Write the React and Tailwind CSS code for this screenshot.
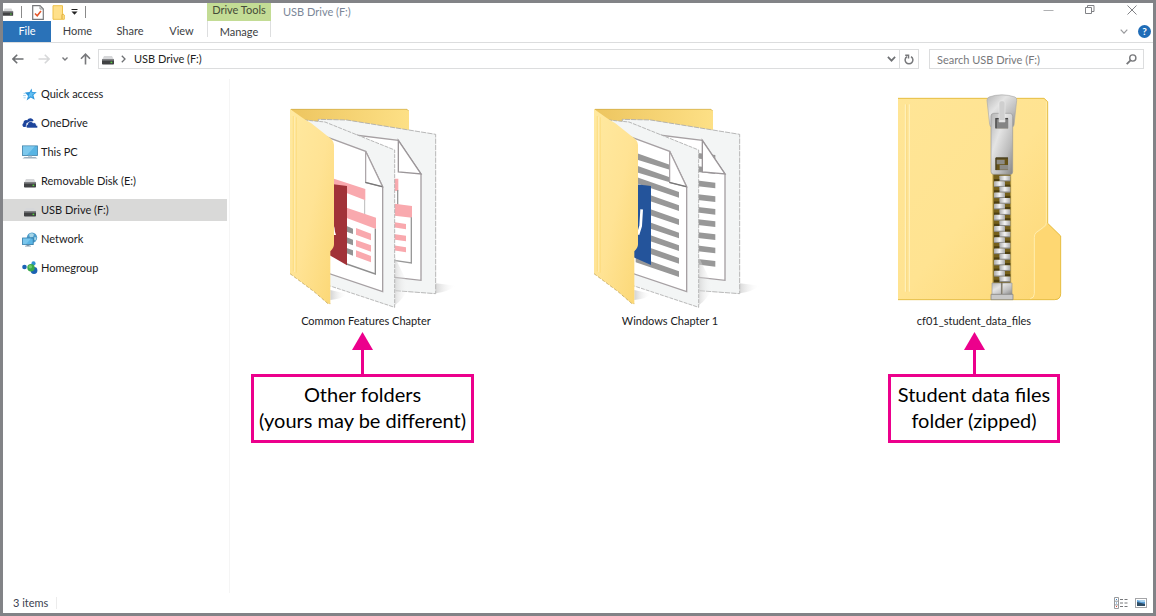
import React from "react";

function DriveIcon({ className = "w-3.5 h-2.5" }) {
  return (
    <svg viewBox="0 0 14 10" className={className} aria-hidden="true">
      <path d="M3 1h8l2 4H1z" fill="#d6d7d9" />
      <path d="M1 4.5h12v4.2q0 .8-.8.8H1.8q-.8 0-.8-.8z" fill="#414244" />
      <path d="M1 4.5h12v1.2H1z" fill="#77797c" />
      <rect x="9.6" y="6.7" width="1.6" height="1.4" fill="#53d63c" />
    </svg>
  );
}

function StarIcon() {
  return (
    <svg viewBox="0 0 14 13" className="w-3.5 h-[13px]" aria-hidden="true">
      <path d="M8.500.5 9.300 3.900l4.500.3-3.400 2.800 1.300 4.800-3.900-2.300-4.200 3.100 1.400-4.700L2 4.600l4.500-.5z" fill="#2f97dc" />
      <path d="M8.300 2.200 8.600 4.800l3.200.2-2.600 1.700.6 2.900-2.200-1.400-2.300 1.300.8-2.700z" fill="#63bff2" />
      <path d="M.6 5.400h2.200M0 7.600h3M.6 9.800h2" stroke="#8ccaf0" strokeWidth=".8" />
    </svg>
  );
}

function CloudIcon() {
  return (
    <svg viewBox="0 0 16 12" className="w-4 h-3" aria-hidden="true">
      <path d="M1.600 10C.2 9.200-.1 6.900 1.500 5.900 1.300 3.600 3.800 2.500 5.100 3.400 6.500.4 10.800.3 11.600 3.900L8 5 4.600 6 4 10z" fill="#1c449b" />
      <path d="M5.600 11C3.600 10.700 3.700 7.900 5.600 7.600 5.600 4.400 9.700 3.500 11 5.900 12.900 5.100 14.500 6.500 14.200 8.200 16.200 8.500 16 11 14.400 11z" fill="#1c449b" stroke="#fff" strokeWidth=".6" />
    </svg>
  );
}

function ComputerIcon() {
  return (
    <svg viewBox="0 0 16 14" className="w-4 h-3.5" aria-hidden="true">
      <rect x=".5" y=".9" width="15" height="9.600" fill="#58b4e3" stroke="#3d81a8" strokeWidth=".8" />
      <path d="M1 1.300h12L5 10H1z" fill="#8bd0f1" opacity=".7" />
      <path d="M6 10.800h4v1.200H6z" fill="#c3ced6" />
      <path d="M2.500 12h11l2 1.500H.500z" fill="#9fb1c0" />
    </svg>
  );
}

function NetworkIcon() {
  return (
    <svg viewBox="0 0 16 15" className="w-4 h-[15px]" aria-hidden="true">
      <circle cx="10" cy="5.600" r="5.200" fill="#4f9dca" />
      <path d="M7 2.500q3-2.400 5 0l-1 2.500-3 .5zM12.500 5l2 .6-.8 3-1.600-1z" fill="#a7d6e8" />
      <rect x=".6" y="6" width="10.600" height="6.600" fill="#5bb5e4" stroke="#2f78a6" strokeWidth=".8" />
      <path d="M1 6.400h8l-5 5.800H1z" fill="#90d2f2" opacity=".6" />
      <path d="M4.500 12.800h3v1h1.500v.8H3v-.8h1.500z" fill="#8299ab" />
    </svg>
  );
}

function HomegroupIcon() {
  return (
    <svg viewBox="0 0 16 14" className="w-4 h-3.5" aria-hidden="true">
      <circle cx="2.500" cy="6" r="2.300" fill="#1c63b5" />
      <circle cx="11.500" cy="2.400" r="2.100" fill="#2f8fd3" />
      <circle cx="12" cy="9.500" r="3.400" fill="#1b62b3" />
      <circle cx="9" cy="6.800" r="3.700" fill="#39a94a" />
      <circle cx="8.300" cy="5.800" r="1.800" fill="#72cc6a" />
    </svg>
  );
}

const places = [
  { name: "Quick access", icon: <StarIcon /> },
  { name: "OneDrive", icon: <CloudIcon /> },
  { name: "This PC", icon: <ComputerIcon /> },
  { name: "Removable Disk (E:)", icon: <DriveIcon className="mt-1 w-3.5 h-2.5" /> },
  { name: "USB Drive (F:)", icon: <DriveIcon className="mt-1 w-3.5 h-2.5" />, current: true },
  { name: "Network", icon: <NetworkIcon /> },
  { name: "Homegroup", icon: <HomegroupIcon /> },
];

function FolderIcon({ id, children, back }) {
  return (
    <svg viewBox="-15 6 576 648" className="w-48 h-[216px]" aria-hidden="true">
      <defs>
        <linearGradient id={id + "-front"} x1="0" y1="0" x2="1" y2="1">
          <stop offset="0" stopColor="#ffe9a0" />
          <stop offset=".5" stopColor="#ffe394" />
          <stop offset="1" stopColor="#fbd775" />
        </linearGradient>
        <linearGradient id={id + "-back"} x1="0" y1="0" x2="1" y2="0">
          <stop offset="0" stopColor="#edc55f" />
          <stop offset="1" stopColor="#fde086" />
        </linearGradient>
        <linearGradient id={id + "-shade"} x1="0" y1="0" x2="1" y2="0">
          <stop offset="0" stopColor="#c8c8c8" />
          <stop offset="1" stopColor="#fff" stopOpacity="0" />
        </linearGradient>
      </defs>
      <path d="M482 580l62 7q-25 18-62 23z" fill={"url(#" + id + "-shade)"} opacity=".7" />
      <path d="M166 600l52 12q-20 16-52 18z" fill={"url(#" + id + "-shade)"} opacity=".8" />
      <path d="M45 57H396L402 63V140H130z" fill={"url(#" + id + "-back)"} />
      <path d="M48 58H396L401 63" fill="none" stroke="#cda945" strokeWidth="2" />
      <path d="M130 88 L215 90 L482 133 V611 L359 602 L130 570z" fill="#f3f5f5" />
      <path d="M130 100V88L215 90 482 133V611L359 602" fill="none" stroke="#aaa" strokeWidth="2.500" strokeDasharray="16 3" />
      <path d="M215 132 L370 151 L438 252 V571 L340 560z" fill="#fff" stroke="#a6a0a3" strokeWidth="4" />
      {back}
      <path d="M370 151V246L438 252z" fill="#fff" stroke="#9b9699" strokeWidth="4" />
      <path d="M359 500l44 90q-20 40-44 56z" fill={"url(#" + id + "-shade)"} opacity=".6" />
      <path d="M88 90 L150 96 L359 180 V652 L160 584z" fill="#f3f5f5" />
      <path d="M88 90L150 96 359 180V652L166 588" fill="none" stroke="#aaa" strokeWidth="2.500" strokeDasharray="12 3" />
      <path d="M120 128 L272 184 L323 290 V605 L160 550z" fill="#fff" stroke="#a6a0a3" strokeWidth="4" />
      {children}
      <path d="M272 184V278L323 291z" fill="#fff" stroke="#a6a0a3" strokeWidth="3.500" />
      <path d="M271 277l51 13" stroke="#777" strokeWidth="4" />
      <path
        d="M45 57 L80 82 Q92 91 108 99 L158 139 Q177 151 177 164 V463 Q177 474 166 484 V641 H159 L116 604 L45 551z"
        fill={"url(#" + id + "-front)"}
      />
      <path d="M45 551L116 604 159 641H166" fill="none" stroke="#b89c50" strokeWidth="2" strokeDasharray="10 5" />
      <path d="M55 78V544M64 82V548" stroke="#fbd976" strokeWidth="2" />
      <path d="M59 80V546" stroke="#fff0bd" strokeWidth="2" />
    </svg>
  );
}

function SlideFolder() {
  return (
    <FolderIcon
      id="slides"
      back={
        <g>
          <path d="M340 266h30v38l-30-4z" fill="#f9a9ae" />
          <path d="M368 300v44" stroke="#999" strokeWidth="4" />
          <path d="M359 341l52 7v35l-52-6z" fill="#f9a9ae" />
          <path d="M409 382v137l-52-8" fill="none" stroke="#999" strokeWidth="4" />
          <path d="M350 395l43 7v16l-43-7zM350 431l43 6v17l-43-6zM350 465l43 7v15l-43-7z" fill="#f9a9ae" />
        </g>
      }
    >
      <path d="M170 264l101 33v34l-101-39z" fill="#f9a9ae" />
      <path d="M269 330v45" stroke="#bbb" strokeWidth="3" />
      <path d="M215 353l88 30v34l-88-33z" fill="#f9a9ae" />
      <path d="M301 416v136l-86-30" fill="none" stroke="#8f8f8f" strokeWidth="4" />
      <path d="M215 408l19 8v16l-19-7zM215 442l19 7v17l-19-7zM215 474l19 7v16l-19-7z" fill="#949494" />
      <path d="M243 414l45 17v20l-45-17zM243 450l45 16v19l-45-16zM243 481l45 17v19l-45-17z" fill="#f9a9ae" />
      <path d="M164 281l52 7v238l-52-30z" fill="#a13238" />
      <path d="M176 405q4 10 4 20l3 10h-10z" fill="#fff" />
    </FolderIcon>
  );
}

const backLines = [188, 228, 271, 312, 350, 387, 426, 466, 506];
const frontLines = [188, 226, 280, 320, 362, 402, 440, 478, 518];

function DocumentFolder() {
  return (
    <FolderIcon
      id="documents"
      back={
        <g fill="#989898">
          {backLines.map((y) => (
            <path key={y} d={`M350 ${y}L409 ${y + 7}v17L350 ${y + 17}z`} />
          ))}
        </g>
      }
    >
      <g fill="#989898">
        {frontLines.map((y, i) =>
          i < 2 ? (
            <path key={y} d={`M170 ${y}L272 ${y + 36}v15L170 ${y + 20}z`} />
          ) : (
            <path key={y} d={`M170 ${y - 20}L300 ${y + 26}v17L170 ${y - 1}z`} />
          )
        )}
      </g>
      <path d="M160 281l56 7v237l-56-25z" fill="#24549b" />
      <path d="M188 358l-3 50-8 26" fill="none" stroke="#fff" strokeWidth="8" />
    </FolderIcon>
  );
}

const teeth = Array.from({ length: 19 }, (_, i) => 272 + i * 16.8);

function ZipFolder() {
  return (
    <svg viewBox="-21 21 576 648" className="w-48 h-[216px]" aria-hidden="true">
      <defs>
        <linearGradient id="zip-body" x1="0" y1="0" x2="1" y2="1">
          <stop offset="0" stopColor="#ffe596" />
          <stop offset=".5" stopColor="#ffe391" />
          <stop offset="1" stopColor="#fdd672" />
        </linearGradient>
        <linearGradient id="zip-metal" x1="0" y1="0" x2="1" y2="1">
          <stop offset="0" stopColor="#b5b5b5" />
          <stop offset=".35" stopColor="#e4e4e4" />
          <stop offset=".7" stopColor="#bcbcbc" />
          <stop offset="1" stopColor="#858585" />
        </linearGradient>
        <linearGradient id="zip-tooth" x1="0" y1="0" x2="1" y2="0">
          <stop offset="0" stopColor="#aaa" />
          <stop offset=".5" stopColor="#f4f4f4" />
          <stop offset="1" stopColor="#aaa" />
        </linearGradient>
      </defs>
      <path d="M39 39H477L488 50V415L527 453V626Q527 644 508 644H39z" fill="url(#zip-body)" />
      <path d="M488 415L527 453V626Q527 644 508 644H430Q448 642 448 626V457Q448 450 454 445L482 425Q488 421 488 415z" fill="#fed772" />
      <path d="M39 40H477L488 50V415L527 453V626Q527 644 508 644H39" fill="none" stroke="#e6be45" strokeWidth="3" />
      <path d="M484 50V413Q484 420 476 426L453 443Q448 448 448 457V626Q448 639 436 641" fill="none" stroke="#ffedae" strokeWidth="3" />
      <path d="M61 58V620M73 58V620" stroke="#fff2c0" strokeWidth="3" />
      <path d="M65 58V620" stroke="#f6d77d" strokeWidth="2" />
      <path d="M324 260H378V598H324z" fill="#75601b" />
      <path d="M324 260v338M377 260v338" stroke="#b39845" strokeWidth="3" />
      {teeth.map((y, i) => (
        <g key={y}>
          <rect x={i % 2 ? 327 : 343} y={y} width="33" height="16" rx="2" fill="url(#zip-tooth)" />
          <path d={`M${i % 2 ? 327 : 343} ${y + 14}h33v3h-33z`} fill="#858585" />
          <path d={`M${i % 2 ? 360 : 327} ${y + 10}h16v7h-16z`} fill="#4d3f11" />
        </g>
      ))}
      <path d="M312 36Q350 23 390 36Q396 39 395 46L387 120Q386 126 380 126H320Q315 126 314 118L306 46Q306 39 312 36z" fill="url(#zip-metal)" stroke="#aaa" strokeWidth="2" />
      <path fillRule="evenodd" d="M326 85H376Q383 86 383 94V260Q383 268 376 268H325Q318 267 318 260V93Q318 86 326 85zM332 100V130H369V100zM332 218V255H369V218z" fill="url(#zip-metal)" stroke="#999" strokeWidth="2" />
      <path d="M332 100H369V130H332z" fill="#858585" />
      <path d="M333 130V101H369" fill="none" stroke="#474747" strokeWidth="4" />
      <path d="M342 54Q342 47 351 47T360 54V111H342z" fill="#cfcfcf" stroke="#eee" strokeWidth="1.500" />
      <path d="M345 108h14" stroke="#eee" strokeWidth="4" />
      <path d="M332 218H369V255H332z" fill="#665319" />
      <path d="M334 224h25v14h-25zM344 240h25v14h-25z" fill="#8d8c87" />
      <path d="M333 255V219H369" fill="none" stroke="#3f3922" strokeWidth="3" />
      <path d="M321 594H349V629H321zM352 594H381V629H352z" fill="url(#zip-metal)" stroke="#999" strokeWidth="2" />
      <path d="M350 595v33" stroke="#555" strokeWidth="2" />
      <path d="M318 628H384V644H318z" fill="#c8c8c8" stroke="#7c7c7c" strokeWidth="2" />
    </svg>
  );
}

function Callout({ lines, className }) {
  return (
    <div className={"flex flex-col items-center text-[#ec008c] " + className}>
      <svg viewBox="0 0 21 42" className="w-[21px] h-[42px]" aria-hidden="true">
        <path d="M10.500 0L21 18H0z" fill="currentColor" />
        <path d="M9 17h3v25H9z" fill="currentColor" />
      </svg>
      <p className="w-full border-[3px] border-[#ec008c] pt-1 pb-[7px] text-center text-[20px] leading-[26px] whitespace-nowrap text-black">
        {lines[0]}
        <br />
        {lines[1]}
      </p>
    </div>
  );
}

function FileItem({ name, icon, children }) {
  return (
    <li className="flex w-[230px] flex-col items-center">
      <a href="#open" className="flex flex-col items-center gap-[5px]">
        {icon}
        <span className="leading-4">{name}</span>
      </a>
      {children}
    </li>
  );
}

function TitleBar() {
  return (
    <div className="flex h-[18px] items-stretch">
      <div className="flex w-[204px] items-center">
        <DriveIcon className="-ml-px w-3 h-2.5" />
        <span className="ml-[7px] h-3 w-px bg-[#8a8a8a]" />
        <button aria-label="Properties" className="ml-2.5">
          <svg viewBox="0 0 12 15" className="w-3 h-[15px]" aria-hidden="true">
            <path d="M.7.700H8L11.300 4v10.300H.700z" fill="#fff" stroke="#77787b" strokeWidth="1.200" />
            <path d="M8 .7V4h3.300" fill="none" stroke="#999" />
            <path d="M3 8.500l2.200 2.200L9 6" fill="none" stroke="#e4572b" strokeWidth="1.600" />
          </svg>
        </button>
        <button aria-label="New folder" className="ml-2">
          <svg viewBox="0 0 13 15" className="w-[13px] h-[15px]" aria-hidden="true">
            <path d="M1 .700h9.500v8l1.800 1.300v4.300H1z" fill="#ffe08a" stroke="#edc04b" />
            <path d="M10 14V10l.7-1.300" fill="none" stroke="#d9a834" />
          </svg>
        </button>
        <button aria-label="Customize Quick Access Toolbar" className="ml-1.5">
          <svg viewBox="0 0 7 6" className="w-[7px] h-1.5" aria-hidden="true">
            <path d="M.5.500h6" stroke="#222" />
            <path d="M.5 2.500h6L3.500 5.800z" fill="#222" />
          </svg>
        </button>
        <span className="ml-[7px] h-3 w-px bg-[#8a8a8a]" />
      </div>
      <div className="w-16 bg-[#c3dc95] text-center leading-[14px] text-[#454b38]">Drive Tools</div>
      <h1 className="ml-3 flex-1 leading-[17px] text-[#7b8798]">USB Drive (F:)</h1>
      <div className="flex items-start text-[#818286]">
        <button aria-label="Minimize" className="mr-[31px]">
          <svg viewBox="0 0 11 12" className="w-[11px] h-3" aria-hidden="true">
            <path d="M.5 7.500h10" stroke="#b0b1b3" />
          </svg>
        </button>
        <button aria-label="Restore" className="mr-8 pt-0.5">
          <svg viewBox="0 0 10 10" className="w-2.5 h-2.5" fill="none" stroke="currentColor" aria-hidden="true">
            <path d="M.5 2.500h6v6h-6zM2.500 2V.500h6.500v6H7" />
          </svg>
        </button>
        <button aria-label="Close" className="mr-4 pt-0.5">
          <svg viewBox="0 0 10 10" className="w-2.5 h-2.5" stroke="currentColor" aria-hidden="true">
            <path d="M.5.500l9 9M9.500.500l-9 9" />
          </svg>
        </button>
      </div>
    </div>
  );
}

function Ribbon() {
  return (
    <div className="flex h-[22px] items-start border-b border-[#dcddde] text-[#3c3e43]">
      <button className="h-[21px] w-12 bg-[#2a72b8] text-white">File</button>
      <button className="h-[21px] w-[53px]">Home</button>
      <button className="h-[21px] w-[52px]">Share</button>
      <button className="h-[21px] w-[51px]">View</button>
      <button className="flex h-4 w-16 justify-center border-x border-[#dddedf]">
        <span className="leading-[21px]">Manage</span>
      </button>
      <div className="flex-1" />
      <button aria-label="Expand the Ribbon" className="mt-2 mr-2.5">
        <svg viewBox="0 0 8 5" className="w-2 h-[5px]" fill="none" aria-hidden="true">
          <path d="M.7.700L4 4.200 7.300.700" stroke="#9a9b9e" strokeWidth="1.200" />
        </svg>
      </button>
      <button
        aria-label="Help"
        className="mt-1 mr-0.5 h-[13px] w-[13px] rounded-full bg-[#1f6cb7] text-[10px] leading-[13px] font-bold text-white"
      >
        ?
      </button>
    </div>
  );
}

function AddressRow() {
  return (
    <div className="flex items-center px-[9px] pt-1.5">
      <button aria-label="Back">
        <svg viewBox="0 0 12 10" className="w-3 h-2.5" fill="none" stroke="#6e7073" strokeWidth="1.600" aria-hidden="true">
          <path d="M11.500 5H1.200M5.200.800L1 5l4.200 4.200" />
        </svg>
      </button>
      <button aria-label="Forward" className="ml-3.5">
        <svg viewBox="0 0 12 10" className="w-3 h-2.5" fill="none" stroke="#d7d8d9" strokeWidth="1.600" aria-hidden="true">
          <path d="M.5 5h10.300M6.800.800L11 5 6.800 9.200" />
        </svg>
      </button>
      <button aria-label="Recent locations" className="ml-3">
        <svg viewBox="0 0 6 4" className="w-1.5 h-1" fill="none" stroke="#77787b" strokeWidth="1.400" aria-hidden="true">
          <path d="M.5.500L3 3 5.500.500" />
        </svg>
      </button>
      <button aria-label="Up" className="ml-3">
        <svg viewBox="0 0 11 12" className="w-[11px] h-3" fill="none" stroke="#77787b" strokeWidth="1.600" aria-hidden="true">
          <path d="M5.500 11.500V1.200M1 5.800L5.500 1.200 10 5.800" />
        </svg>
      </button>
      <div className="ml-[7px] flex h-5 flex-1 items-center border border-[#dcddde]">
        <DriveIcon className="mt-0.5 ml-0.5 w-3.5 h-2.5" />
        <svg viewBox="0 0 5 8" className="ml-1.5 w-[5px] h-2" fill="none" stroke="#6e7073" strokeWidth="1.300" aria-hidden="true">
          <path d="M.8.800L4 4 .8 7.200" />
        </svg>
        <a href="#drive" className="ml-2 flex-1 text-[#1f1f22]">USB Drive (F:)</a>
        <button aria-label="Previous locations" className="mr-[3px]">
          <svg viewBox="0 0 9 6" className="w-[9px] h-1.5" fill="none" stroke="#6e7073" strokeWidth="1.700" aria-hidden="true">
            <path d="M.9.900L4.500 4.700 8.100.900" />
          </svg>
        </button>
        <button aria-label="Refresh" className="flex h-full w-[19px] items-center justify-center border-l border-[#dcddde]">
          <svg viewBox="0 0 10 11" className="w-2.5 h-[11px]" fill="none" stroke="#77787b" strokeWidth="1.500" aria-hidden="true">
            <path d="M7 2.600A3.900 3.900 0 1 1 3 2.600" />
            <path d="M1.200 1.200h3.300v3.300" />
          </svg>
        </button>
      </div>
      <div className="ml-2.5 flex h-5 w-[215px] items-center border border-[#dcddde] pr-1.5 pl-[7px]">
        <input
          type="text"
          aria-label="Search USB Drive (F:)"
          placeholder="Search USB Drive (F:)"
          className="h-full min-w-0 flex-1 outline-none placeholder:text-[#77787b]"
        />
        <svg viewBox="0 0 11 11" className="w-[11px] h-[11px]" fill="none" stroke="#77787b" aria-hidden="true">
          <circle cx="6.800" cy="4" r="3.100" strokeWidth="1.400" />
          <path d="M4.500 6.300L.700 10.200" strokeWidth="1.800" />
        </svg>
      </div>
    </div>
  );
}

export default function App() {
  return (
    <div className="flex min-h-screen flex-col border-[3px] border-[#828387] bg-white font-[Lato,'Open_Sans',sans-serif] text-[11px] text-[#1a1a1c]">
      <header>
        <TitleBar />
        <Ribbon />
        <AddressRow />
      </header>
      <div className="mt-2.5 flex flex-1">
        <nav aria-label="Places" className="w-[227px] border-r border-[#f5f5f5] pt-1 pr-0.5">
          <ul className="flex flex-col gap-[7px]">
            {places.map((p) => (
              <li key={p.name}>
                <a
                  href="#place"
                  aria-current={p.current ? "page" : undefined}
                  className={"flex h-[22px] items-center gap-[3px] pl-[19px] " + (p.current ? "bg-[#d9d9d8]" : "")}
                >
                  <span className="flex w-4 justify-center">{p.icon}</span>
                  {p.name}
                </a>
              </li>
            ))}
          </ul>
        </nav>
        <main className="flex-1 pt-[13px] pl-[21px]">
          <ul className="flex flex-wrap items-start gap-x-[74px] gap-y-10">
            <FileItem name="Common Features Chapter" icon={<SlideFolder />}>
              <Callout lines={["Other folders", "(yours may be different)"]} className="mt-[3px] w-[223px] self-start" />
            </FileItem>
            <FileItem name="Windows Chapter 1" icon={<DocumentFolder />} />
            <FileItem name="cf01_student_data_files" icon={<ZipFolder />}>
              <Callout lines={["Student data files", "folder (zipped)"]} className="mt-[3px] w-[172px]" />
            </FileItem>
          </ul>
        </main>
      </div>
      <footer className="flex h-5 items-center pr-1.5 pl-2.5 text-[#3b4250]">
        <span>3 items</span>
        <span className="ml-2 h-3 w-px bg-[#ececec]" />
        <div className="flex-1" />
        <button aria-label="Details view">
          <svg viewBox="0 0 14 12" className="w-3.5 h-3" fill="none" aria-hidden="true">
            <path d="M.5.500h4v11h-4zM.5 4.200h4M.5 7.900h4" stroke="#999a9d" />
            <path d="M6 2.500h3M10.500 2.500h3M6 6h3M10.500 6h3M6 9.500h3M10.500 9.500h3" stroke="#77787b" />
            <path d="M2 2h1v1H2zM2 5.600h1v1H2z" fill="#3c84c4" />
            <path d="M2 9h1v1H2z" fill="#e04a3a" />
          </svg>
        </button>
        <button aria-label="Large icons view" className="ml-[7px]">
          <svg viewBox="0 0 12 10" className="w-3 h-2.5" aria-hidden="true">
            <rect x=".5" y=".5" width="11" height="9" fill="#fff" stroke="#a4a5a8" />
            <path d="M2 2h8v6H2z" fill="#5b9fd8" />
            <path d="M2 4l4 1 4 1v2H2z" fill="#2e4c64" />
            <path d="M2 2h8v2L6 4z" fill="#a9d3f0" />
          </svg>
        </button>
      </footer>
    </div>
  );
}
